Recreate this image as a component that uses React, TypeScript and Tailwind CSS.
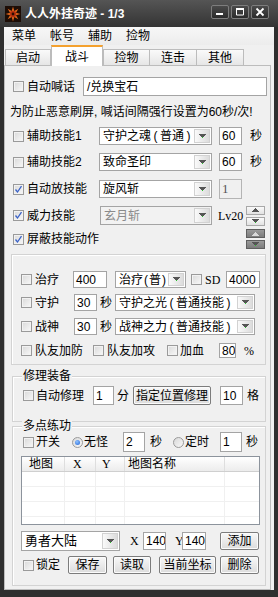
import React from "react";

const serif = "font-['Liberation_Serif',serif]";

function Check({ on = false, className = "" }: { on?: boolean; className?: string }) {
  return (
    <span
      className={`flex h-[11px] w-[11px] shrink-0 items-center justify-center border border-[#9a9a9a] bg-[linear-gradient(135deg,#d9d9d9,#f8f8f8)] shadow-[inset_0_0_0_1px_#f2f2f2] ${className}`}
    >
      {on && (
        <svg width="9" height="9" viewBox="0 0 9 9">
          <path d="M1.5 4.5 3.5 7 7.5 1.2" fill="none" stroke="#3a62c8" strokeWidth="1.3" />
        </svg>
      )}
    </span>
  );
}

function Radio({ on = false, className = "" }: { on?: boolean; className?: string }) {
  return (
    <span
      className={`flex h-[11px] w-[11px] shrink-0 items-center justify-center rounded-full border border-[#9a9a9a] bg-[linear-gradient(135deg,#d9d9d9,#f8f8f8)] ${className}`}
    >
      {on && <span className="h-[5px] w-[5px] rounded-full bg-[radial-gradient(circle_at_40%_35%,#8fc2ff,#1f63d6)]" />}
    </span>
  );
}

function Field({ className = "", children, dim = false }: { className?: string; children?: React.ReactNode; dim?: boolean }) {
  return (
    <span
      className={`flex shrink-0 items-center overflow-hidden whitespace-nowrap border pl-[2px] ${
        dim ? "border-[#b4b4b4] bg-[#f0f0f0] text-[#555]" : "border-[#a4a4a4] bg-white"
      } ${className}`}
    >
      {children}
    </span>
  );
}

// wider half-width parens, as the old GDI font draws them
function Paren({ children, narrow = false }: { children: string; narrow?: boolean }) {
  return <span className={`inline-block text-center ${narrow ? "w-[6px]" : "w-[9px]"}`}>{children}</span>;
}

function DownArrow() {
  return (
    <svg width="7" height="5" viewBox="0 0 7 5">
      <path d="M0 0h7v1H6v1H5v1H2V2H1V1H0z" fill="#555" />
      <rect x="3" y="3" width="1" height="1" fill="#27c22a" />
    </svg>
  );
}

function UpArrow({ color = "#555" }: { color?: string }) {
  return (
    <svg width="7" height="4" viewBox="0 0 7 4">
      <path d="M3 0h1v1h1v1h1v1h1v1H0V3h1V2h1V1h1z" fill={color} />
    </svg>
  );
}

function Combo({ className = "", children, dim = false }: { className?: string; children?: React.ReactNode; dim?: boolean }) {
  return (
    <span
      className={`flex shrink-0 items-center border border-[#a4a4a4] ${dim ? "bg-[#f2f2f2] text-[#8a8a8a]" : "bg-white"} ${className}`}
    >
      <span className="flex-1 overflow-hidden whitespace-nowrap pl-[3px]">{children}</span>
      <span className="mr-[1px] flex h-[calc(100%-2px)] w-[16px] items-center justify-center border border-[#d2d2d2] bg-gradient-to-r from-[#fafafa] to-[#dcdcdc]">
        <DownArrow />
      </span>
    </span>
  );
}

function Btn({ className = "", children }: { className?: string; children?: React.ReactNode }) {
  return (
    <span
      className={`flex shrink-0 items-center justify-center whitespace-nowrap rounded-[2px] border border-[#7c7c7c] bg-gradient-to-b from-[#f8f8f8] to-[#dcdcdc] shadow-[inset_0_0_0_1px_#fbfbfb] ${className}`}
    >
      {children}
    </span>
  );
}

function Spinner({ dark = false, className = "" }: { dark?: boolean; className?: string }) {
  const box = dark
    ? "border-[#5f5f5f] bg-gradient-to-b from-[#9a9a9a] to-[#7c7c7c]"
    : "border-[#a8a8a8] bg-gradient-to-b from-[#fafafa] to-[#e2e2e2]";
  return (
    <span className={`flex w-[19px] shrink-0 flex-col gap-[2px] ${className}`}>
      <span className={`flex h-[9px] items-center justify-center border ${box}`}>
        <UpArrow color={dark ? "#d8d8d8" : "#555"} />
      </span>
      <span className={`flex h-[9px] items-center justify-center border ${box}`}>
        <DownArrow />
      </span>
    </span>
  );
}

function AppIcon() {
  return (
    <svg width="16" height="16" viewBox="0 0 16 16">
      <rect width="16" height="16" fill="#1c0d06" />
      <path
        d="M8 0.5 9.3 5 13.3 2.7 11 6.7 15.5 8 11 9.3 13.3 13.3 9.3 11 8 15.5 6.7 11 2.7 13.3 5 9.3 0.5 8 5 6.7 2.7 2.7 6.7 5z"
        fill="#e0661c"
      />
      <circle cx="8" cy="8" r="3.2" fill="#b8320f" />
      <circle cx="8" cy="8" r="1.4" fill="#2a0c04" />
    </svg>
  );
}

const winBtn =
  "flex h-[14px] w-[18px] items-center justify-center rounded-[2px] border border-[#7d7d7d] bg-gradient-to-b from-[#4a4a4a] to-[#2c2c2c]";

export default function App() {
  return (
    <div className="flex h-[597px] w-[278px] flex-col overflow-hidden bg-[#2f2f2f] font-['Liberation_Sans','Noto_Sans_CJK_SC',sans-serif] text-[12px] leading-[14px] text-black">
      {/* title bar */}
      <div className="flex h-[27px] shrink-0 bg-gradient-to-b from-[#555555] to-[#343434] pl-[5px] pr-[9px]">
        <div className="flex h-full items-center">
          <AppIcon />
          <span className="ml-[4px] font-bold text-white">人人外挂奇迹 - 1/3</span>
        </div>
        <div className="ml-auto mt-[5px] flex gap-[2px]">
          <span className={winBtn}>
            <svg width="10" height="10" viewBox="0 0 10 10">
              <rect x="1" y="6" width="7" height="2" fill="#fff" />
            </svg>
          </span>
          <span className={winBtn}>
            <svg width="10" height="10" viewBox="0 0 10 10">
              <path d="M1.5 2.5h7v5.5h-7z" fill="none" stroke="#fff" strokeWidth="1" />
              <rect x="1" y="1" width="8" height="2" fill="#fff" />
            </svg>
          </span>
          <span className={winBtn}>
            <svg width="10" height="10" viewBox="0 0 10 10">
              <path d="M1.5 1.5 8.5 8.5M8.5 1.5 1.5 8.5" stroke="#fff" strokeWidth="1.8" />
            </svg>
          </span>
        </div>
      </div>

      <div className="mx-[4px] mb-[7px] flex flex-1 flex-col bg-[#f0f0f0]">
        {/* menu bar */}
        <div className="flex h-[18px] shrink-0 items-center gap-[14px] bg-gradient-to-b from-[#f7f7f7] to-[#ececec] pl-[8px]">
          <span>菜单</span>
          <span>帐号</span>
          <span>辅助</span>
          <span>捡物</span>
        </div>

        {/* tabs */}
        <div className="flex h-[20px] shrink-0 items-end pl-[1px]">
          <span className="flex h-[16px] w-[46px] items-center justify-center border border-b-0 border-[#bcbcbc] bg-gradient-to-b from-[#fafafa] to-[#e6e6e6]">启动</span>
          <span className="z-10 mb-[-1px] flex h-[21px] w-[52px] items-center justify-center border-x border-t-2 border-x-[#bcbcbc] border-t-[#f4a12f] bg-white">战斗</span>
          <span className="flex h-[16px] w-[47px] items-center justify-center border border-b-0 border-[#bcbcbc] bg-gradient-to-b from-[#fafafa] to-[#e6e6e6]">捡物</span>
          <span className="flex h-[16px] w-[47px] items-center justify-center border border-b-0 border-l-0 border-[#bcbcbc] bg-gradient-to-b from-[#fafafa] to-[#e6e6e6]">连击</span>
          <span className="flex h-[16px] w-[47px] items-center justify-center border border-b-0 border-l-0 border-[#bcbcbc] bg-gradient-to-b from-[#fafafa] to-[#e6e6e6]">其他</span>
        </div>

        {/* panel */}
        <div className="mr-[3px] flex flex-1 flex-col border border-[#bcbcbc] bg-[#f0f0f0]">
          <div className="mt-[11px] flex h-[19px] items-center">
            <Check className="ml-[8px]" />
            <span className="ml-[3px] w-[48px]">自动喊话</span>
            <Field className="ml-[8px] h-[19px] w-[184px] pl-[3px]">/兑换宝石</Field>
          </div>

          <div className="ml-[5px] mt-[9px] h-[14px] whitespace-nowrap">为防止恶意刷屏, 喊话间隔强行设置为60秒/次!</div>

          <div className="mt-[8px] flex h-[18px] items-center">
            <Check className="ml-[8px]" />
            <span className="ml-[3px] w-[72px]">辅助技能1</span>
            <Combo className="h-[18px] w-[113px]">
              守护之魂<Paren>(</Paren>普通<Paren>)</Paren>
            </Combo>
            <Field className="ml-[7px] h-[18px] w-[23px]">60</Field>
            <span className="ml-[8px]">秒</span>
          </div>

          <div className="mt-[8px] flex h-[18px] items-center">
            <Check className="ml-[8px]" />
            <span className="ml-[3px] w-[72px]">辅助技能2</span>
            <Combo className="h-[18px] w-[113px]">致命圣印</Combo>
            <Field className="ml-[7px] h-[18px] w-[23px]">60</Field>
            <span className="ml-[8px]">秒</span>
          </div>

          <div className="mt-[8px] flex h-[20px] items-center">
            <Check on className="ml-[8px]" />
            <span className="ml-[3px] w-[72px]">自动放技能</span>
            <Combo className="h-[18px] w-[113px]">旋风斩</Combo>
            <Field dim className={`ml-[7px] h-[20px] w-[23px] ${serif} text-[13px]`}>1</Field>
          </div>

          <div className="mt-[7px] flex h-[19px] items-center">
            <Check on className="ml-[8px]" />
            <span className="ml-[3px] w-[73px]">威力技能</span>
            <Combo dim className="h-[19px] w-[112px]">玄月斩</Combo>
            <span className={`ml-[6px] w-[23px] ${serif} text-[12px]`}>Lv20</span>
            <Spinner className="ml-[5px]" />
          </div>

          <div className="mt-[4px] flex h-[20px] items-center">
            <Check on className="ml-[8px]" />
            <span className="ml-[3px]">屏蔽技能动作</span>
            <Spinner dark className="ml-auto mr-[5px]" />
          </div>

          {/* group 1 */}
          <div className="ml-[6px] mt-[5px] h-[111px] w-[255px] shrink-0 border border-[#d3d3d3] shadow-[inset_1px_1px_0_#fff]">
            <div className="mt-[16px] flex h-[17px] items-center">
              <Check className="ml-[9px]" />
              <span className="ml-[3px] w-[38px]">治疗</span>
              <Field className="h-[17px] w-[34px]">400</Field>
              <Combo className="ml-[8px] h-[17px] w-[71px]">
                治疗<Paren narrow>(</Paren>普<Paren narrow>)</Paren>
              </Combo>
              <Check className="ml-[5px]" />
              <span className={`ml-[3px] w-[21px] ${serif}`}>SD</span>
              <Field className="h-[17px] w-[34px]">4000</Field>
            </div>
            <div className="mt-[6px] flex h-[17px] items-center">
              <Check className="ml-[9px]" />
              <span className="ml-[3px] w-[39px]">守护</span>
              <Field className="h-[17px] w-[23px]">30</Field>
              <span className="ml-[3px] w-[15px]">秒</span>
              <Combo className="h-[17px] w-[140px]">
                守护之光<Paren>(</Paren>普通技能<Paren>)</Paren>
              </Combo>
            </div>
            <div className="mt-[7px] flex h-[17px] items-center">
              <Check className="ml-[9px]" />
              <span className="ml-[3px] w-[39px]">战神</span>
              <Field className="h-[17px] w-[23px]">30</Field>
              <span className="ml-[3px] w-[15px]">秒</span>
              <Combo className="h-[17px] w-[140px]">
                战神之力<Paren>(</Paren>普通技能<Paren>)</Paren>
              </Combo>
            </div>
            <div className="mt-[8px] flex h-[15px] items-center">
              <Check className="ml-[9px]" />
              <span className="ml-[3px] w-[58px]">队友加防</span>
              <Check />
              <span className="ml-[3px] w-[60px]">队友加攻</span>
              <Check />
              <span className="ml-[2px] w-[39px]">加血</span>
              <Field className="h-[15px] w-[17px] pl-[1px]">80</Field>
              <span className={`ml-[8px] ${serif}`}>%</span>
            </div>
          </div>

          {/* group 2 */}
          <div className="ml-[7px] mt-[11px] w-[254px] shrink-0 border border-[#d3d3d3] pb-[16px] shadow-[inset_1px_1px_0_#fff]">
            <div className="ml-[9px] mt-[-8px] h-[14px] w-fit bg-[#f0f0f0] px-[1px]">修理装备</div>
            <div className="mt-[3px] flex h-[19px] items-center">
              <Check className="ml-[10px]" />
              <span className="ml-[2px] w-[57px]">自动修理</span>
              <Field className="h-[19px] w-[21px]">1</Field>
              <span className="ml-[3px] w-[12px]">分</span>
              <Btn className="ml-[4px] h-[19px] w-[78px]">指定位置修理</Btn>
              <Field className="ml-[9px] h-[19px] w-[23px]">10</Field>
              <span className="ml-[4px]">格</span>
            </div>
          </div>

          {/* group 3 */}
          <div className="ml-[7px] mt-[4px] w-[254px] shrink-0 border border-[#d3d3d3] pb-[11px] shadow-[inset_1px_1px_0_#fff]">
            <div className="ml-[9px] mt-[-8px] h-[14px] w-fit bg-[#f0f0f0] px-[1px]">多点练功</div>
            <div className="mt-[-1px] flex h-[20px] items-center">
              <Check className="ml-[10px]" />
              <span className="ml-[2px] w-[36px]">开关</span>
              <Radio on />
              <span className="ml-[1px] w-[39px]">无怪</span>
              <Field className="h-[20px] w-[22px]">2</Field>
              <span className="ml-[5px] w-[12px]">秒</span>
              <Radio className="ml-[11px]" />
              <span className="ml-[1px] w-[35px]">定时</span>
              <Field className="h-[20px] w-[22px]">1</Field>
              <span className="ml-[4px]">秒</span>
            </div>

            <div className="ml-[8px] mt-[4px] h-[69px] w-[239px] overflow-hidden border border-[#8c939c] bg-white">
              <div className="flex h-[15px] border-b border-[#cfcfcf] bg-gradient-to-b from-white to-[#ececec]">
                <span className="w-[43px] border-r border-[#dedede] pl-[7px]">地图</span>
                <span className={`w-[31px] border-r border-[#dedede] pl-[8px] ${serif}`}>X</span>
                <span className={`w-[29px] border-r border-[#dedede] pl-[6px] ${serif}`}>Y</span>
                <span className="w-[100px] border-r border-[#dedede] pl-[3px]">地图名称</span>
                <span className="flex-1" />
              </div>
              {[0, 1, 2, 3].map((r) => (
                <div key={r} className="flex h-[15px] border-b border-[#f0f0f0]">
                  <span className="w-[43px] border-r border-[#f0f0f0]" />
                  <span className="w-[31px] border-r border-[#f0f0f0]" />
                  <span className="w-[29px] border-r border-[#f0f0f0]" />
                  <span className="w-[100px] border-r border-[#f0f0f0]" />
                  <span className="flex-1" />
                </div>
              ))}
            </div>

            <div className="mt-[6px] flex h-[20px] items-center">
              <Combo className="ml-[8px] h-[20px] w-[99px] text-[13px]">勇者大陆</Combo>
              <span className={`ml-[10px] w-[13px] ${serif}`}>X</span>
              <Field className="h-[18px] w-[23px]">140</Field>
              <span className={`ml-[9px] w-[7px] ${serif}`}>Y</span>
              <Field className="h-[18px] w-[24px]">140</Field>
              <Btn className="ml-[14px] h-[18px] w-[39px]">添加</Btn>
            </div>

            <div className="mt-[5px] flex h-[18px] items-center">
              <Check className="ml-[10px]" />
              <span className="ml-[2px] w-[32px]">锁定</span>
              <Btn className="h-[18px] w-[39px]">保存</Btn>
              <Btn className="ml-[6px] h-[18px] w-[38px]">读取</Btn>
              <Btn className="ml-[8px] h-[18px] w-[57px]">当前坐标</Btn>
              <Btn className="ml-[4px] h-[18px] w-[39px]">删除</Btn>
            </div>
          </div>
        </div>
      </div>
    </div>
  );
}
